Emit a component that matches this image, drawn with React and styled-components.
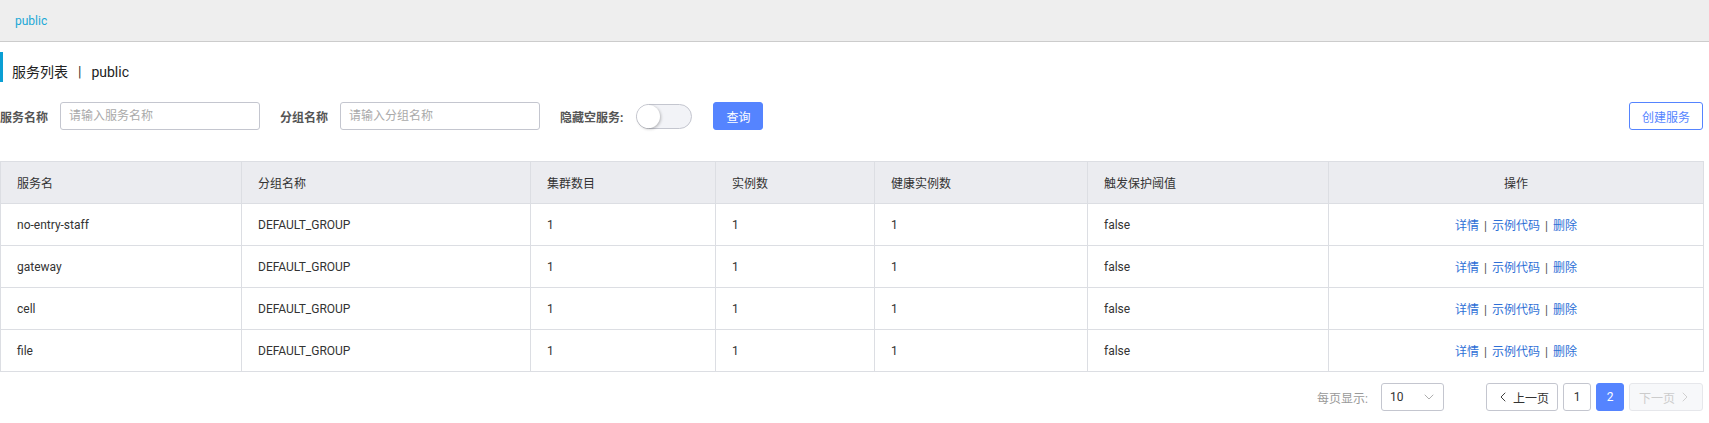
import styled, { createGlobalStyle } from 'styled-components';
import { ChevronDown, ChevronLeft, ChevronRight } from 'lucide-react';

const GlobalStyle = createGlobalStyle`
  body {
    margin: 0;
    background: #fff;
    color: #333;
    font-family: Roboto, "Noto Sans CJK SC", sans-serif;
    font-size: 12px;
  }
  * { box-sizing: border-box; }
`;

const Crumbs = styled.div`
  height: 42px;
  background: #eeeeee;
  border-bottom: 1px solid #cccccc;
  display: flex;
  align-items: center;
  padding-left: 15px;
  color: #1ba8d6;
  font-size: 12px;
`;

const Body = styled.div`
  padding-right: 6px;
`;

const Title = styled.div`
  margin-top: 10px;
  height: 30px;
  padding: 5px 0 0 9px;
  line-height: 30px;
  border-left: 3px solid #0a9fd4;
  font-size: 14px;
  color: #222;
`;

const Pipe = styled.span`
  margin: 0 10px;
  color: #333;
`;

const FormRow = styled.div`
  margin-top: 20px;
  height: 28px;
  display: flex;
  align-items: center;
`;

const Item = styled.div`
  display: flex;
  align-items: center;
  gap: ${p => p.$gap || 12}px;
  margin-left: ${p => p.$ml || 0}px;
`;

const Label = styled.span`
  font-size: 12px;
  font-weight: 700;
  color: #555;
  white-space: nowrap;
`;

const Input = styled.input`
  width: 200px;
  height: 28px;
  border: 1px solid #c4c6cf;
  border-radius: 3px;
  padding: 0 8px;
  font: inherit;
  font-size: 12px;
  color: #333;
  outline: none;
  &::placeholder { color: #aaa; }
`;

const Switch = styled.div`
  position: relative;
  width: 56px;
  height: 25px;
  border: 1px solid #c4c6cf;
  border-radius: 13px;
  background: #f2f3f7;
`;

const Knob = styled.span`
  position: absolute;
  left: 0;
  top: 0;
  width: 23px;
  height: 23px;
  border-radius: 50%;
  background: #fff;
  box-shadow: 1px 1px 3px rgba(0, 0, 0, 0.25);
`;

const Button = styled.button`
  height: 28px;
  padding: 0;
  width: ${p => p.$w}px;
  margin-left: ${p => (p.$push ? 'auto' : `${p.$ml || 0}px`)};
  border-radius: 3px;
  font: inherit;
  font-size: 12px;
  cursor: pointer;
  border: 1px solid #5584ff;
  background: ${p => (p.$primary ? '#5584ff' : '#fff')};
  color: ${p => (p.$primary ? '#fff' : '#5584ff')};
`;

const Table = styled.table`
  margin-top: 31px;
  width: 100%;
  table-layout: fixed;
  border-collapse: collapse;
  border: 1px solid #dcdee3;
`;

const Th = styled.th`
  height: 42px;
  padding: 0 16px;
  background: #ebecf0;
  border: 1px solid #dcdee3;
  font-weight: 400;
  font-size: 12px;
  color: #333;
  text-align: ${p => p.$align || 'left'};
`;

const Td = styled.td`
  height: 42px;
  padding: 0 16px;
  border: 1px solid #dcdee3;
  font-size: 12px;
  color: #333;
  text-align: ${p => p.$align || 'left'};
`;

const Link = styled.a`
  color: #2e6fd6;
  cursor: pointer;
`;

const Sep = styled.span`
  margin: 0 5px;
  color: #555;
`;

const Pager = styled.div`
  margin-top: 11px;
  display: flex;
  align-items: center;
  justify-content: flex-end;
`;

const PageSizeLabel = styled.span`
  color: #999;
  font-size: 12px;
  margin-right: 13px;
`;

const Select = styled.div`
  width: 63px;
  height: 28px;
  border: 1px solid #c4c6cf;
  border-radius: 3px;
  display: flex;
  align-items: center;
  justify-content: space-between;
  padding: 0 6px 0 8px;
  margin-right: 37px;
  color: #333;
`;

const PageBtn = styled.button`
  height: 28px;
  min-width: 28px;
  width: ${p => (p.$w ? `${p.$w}px` : 'auto')};
  margin-left: 5px;
  padding: 0;
  display: flex;
  align-items: center;
  justify-content: center;
  gap: 2px;
  border-radius: 3px;
  font: inherit;
  font-size: 12px;
  border: 1px solid ${p => (p.$active ? '#5584ff' : p.$disabled ? '#e6e7eb' : '#c4c6cf')};
  background: ${p => (p.$active ? '#5584ff' : p.$disabled ? '#f7f8fa' : '#fff')};
  color: ${p => (p.$active ? '#fff' : p.$disabled ? '#ccc' : '#333')};
`;

const columns = [
  { title: '服务名', width: 241 },
  { title: '分组名称', width: 289 },
  { title: '集群数目', width: 185 },
  { title: '实例数', width: 159 },
  { title: '健康实例数', width: 213 },
  { title: '触发保护阈值', width: 241 },
  { title: '操作', width: 375, align: 'center' },
];

const services = [
  { name: 'no-entry-staff' },
  { name: 'gateway' },
  { name: 'cell' },
  { name: 'file' },
];

export default function App() {
  return (
    <>
      <GlobalStyle />
      <Crumbs>public</Crumbs>
      <Body>
        <Title>
          服务列表<Pipe>|</Pipe>public
        </Title>
        <FormRow>
          <Item>
            <Label>服务名称</Label>
            <Input placeholder="请输入服务名称" />
          </Item>
          <Item $ml={20}>
            <Label>分组名称</Label>
            <Input placeholder="请输入分组名称" />
          </Item>
          <Item $ml={20} $gap={13}>
            <Label>隐藏空服务:</Label>
            <Switch>
              <Knob />
            </Switch>
          </Item>
          <Button $primary $w={50} $ml={21}>查询</Button>
          <Button $push $w={74}>创建服务</Button>
        </FormRow>
        <Table>
          <colgroup>
            {columns.map(c => (
              <col key={c.title} style={{ width: c.width }} />
            ))}
          </colgroup>
          <thead>
            <tr>
              {columns.map(c => (
                <Th key={c.title} $align={c.align}>{c.title}</Th>
              ))}
            </tr>
          </thead>
          <tbody>
            {services.map(s => (
              <tr key={s.name}>
                <Td>{s.name}</Td>
                <Td>DEFAULT_GROUP</Td>
                <Td>1</Td>
                <Td>1</Td>
                <Td>1</Td>
                <Td>false</Td>
                <Td $align="center">
                  <Link>详情</Link>
                  <Sep>|</Sep>
                  <Link>示例代码</Link>
                  <Sep>|</Sep>
                  <Link>删除</Link>
                </Td>
              </tr>
            ))}
          </tbody>
        </Table>
        <Pager>
          <PageSizeLabel>每页显示:</PageSizeLabel>
          <Select>
            <span>10</span>
            <ChevronDown size={16} strokeWidth={1.2} color="#999" />
          </Select>
          <PageBtn $w={72}>
            <ChevronLeft size={16} strokeWidth={1.4} />
            上一页
          </PageBtn>
          <PageBtn>1</PageBtn>
          <PageBtn $active>2</PageBtn>
          <PageBtn $w={74} $disabled>
            下一页
            <ChevronRight size={16} strokeWidth={1.4} />
          </PageBtn>
        </Pager>
      </Body>
    </>
  );
}
